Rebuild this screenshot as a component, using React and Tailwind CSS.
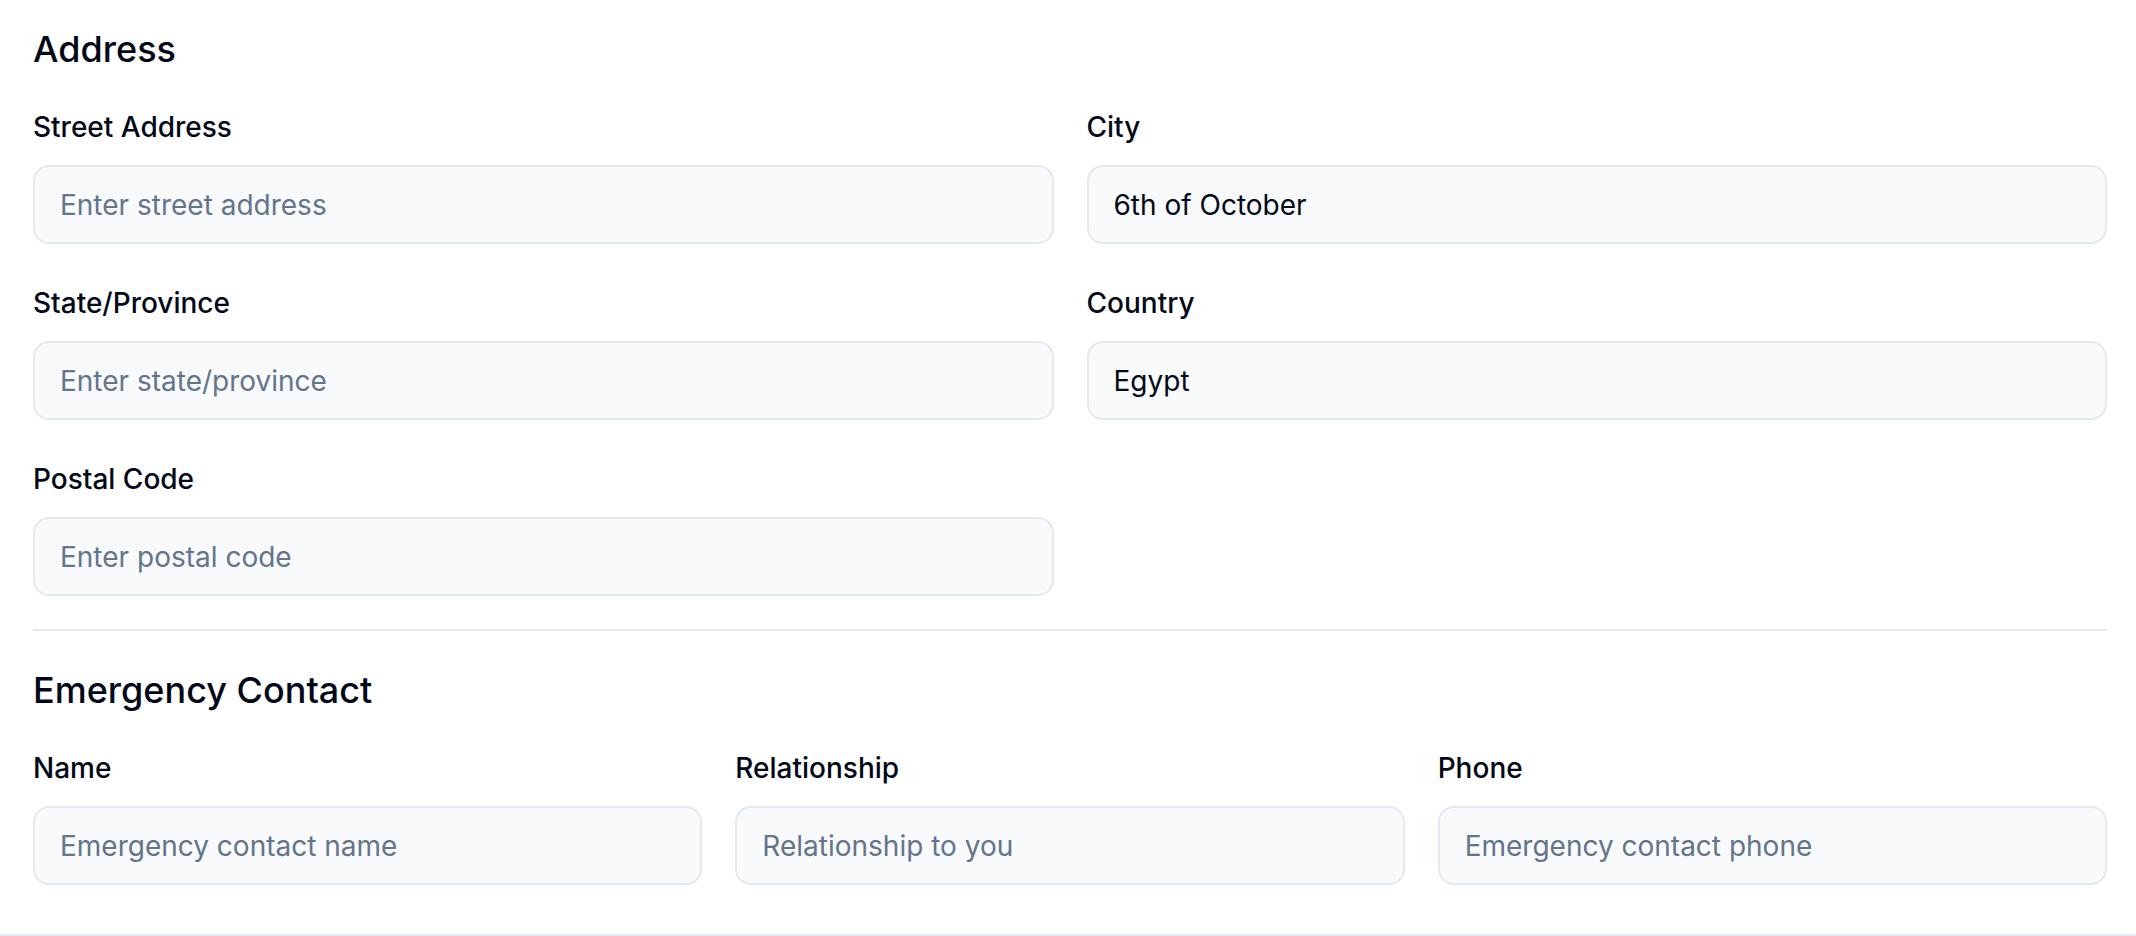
import React from 'react';

const addressRows = [
  [
    { label: 'Street Address', placeholder: 'Enter street address' },
    { label: 'City', value: '6th of October' },
  ],
  [
    { label: 'State/Province', placeholder: 'Enter state/province' },
    { label: 'Country', value: 'Egypt' },
  ],
  [{ label: 'Postal Code', placeholder: 'Enter postal code' }],
];

const emergencyFields = [
  { label: 'Name', placeholder: 'Emergency contact name' },
  { label: 'Relationship', placeholder: 'Relationship to you' },
  { label: 'Phone', placeholder: 'Emergency contact phone' },
];

function Field({ label, placeholder, value }) {
  return (
    <div className="flex flex-col gap-[18px]">
      <label className="text-[28px] leading-[40px] font-medium text-[#020817]">{label}</label>
      <input
        type="text"
        defaultValue={value}
        placeholder={placeholder}
        className="h-[79px] w-full rounded-[16px] border-2 border-[#e3e9f1] bg-[#f8fafc] px-[25px] text-[28px] text-[#020817] placeholder:text-[#64748b] outline-none"
      />
    </div>
  );
}

export default function App() {
  return (
    <div className="min-h-[936px] bg-white font-['Inter',sans-serif]">
      <div className="border-b-2 border-[#e3e9f1] pl-[33px] pr-[29px] pt-[25px] pb-[49px]">
        <section>
          <h3 className="text-[36px] leading-[48px] font-medium text-[#020817]">Address</h3>
          <div className="mt-[34px] flex flex-col gap-[39px]">
            {addressRows.map((row, i) => (
              <div key={i} className="grid grid-cols-2 gap-[33px]">
                {row.map((f) => (
                  <Field key={f.label} {...f} />
                ))}
              </div>
            ))}
          </div>
        </section>

        <div className="mt-[33px] h-[2px] bg-[#e3e9f1]" />

        <section className="mt-[35px]">
          <h3 className="text-[36px] leading-[48px] font-medium text-[#020817]">Emergency Contact</h3>
          <div className="mt-[34px] grid grid-cols-3 gap-[33px]">
            {emergencyFields.map((f) => (
              <Field key={f.label} {...f} />
            ))}
          </div>
        </section>
      </div>
    </div>
  );
}
